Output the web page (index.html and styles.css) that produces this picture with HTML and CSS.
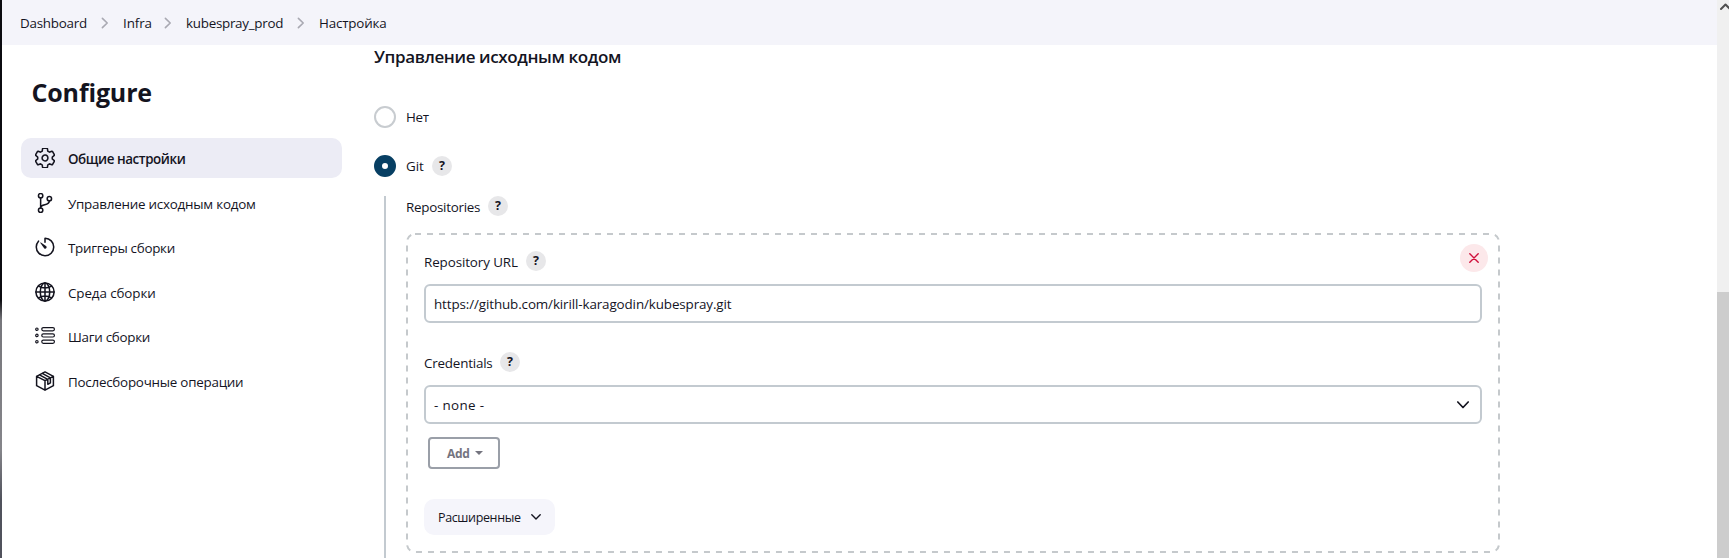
FILE: index.html
```html
<!DOCTYPE html>
<html lang="ru">
<head>
<meta charset="utf-8">
<title>Настройка</title>
<link rel="stylesheet" href="styles.css">
</head>
<body>
<div class="edge"></div>
<div class="page">
  <nav class="crumbs">
    <span class="crumb c-dash">Dashboard</span>
    <svg class="sep" viewBox="0 0 8 12"><path d="M1.4 1.400l4.800 4.600-4.800 4.600"/></svg>
    <span class="crumb c-infra">Infra</span>
    <svg class="sep" viewBox="0 0 8 12"><path d="M1.4 1.400l4.800 4.600-4.800 4.600"/></svg>
    <span class="crumb c-kube">kubespray_prod</span>
    <svg class="sep" viewBox="0 0 8 12"><path d="M1.4 1.400l4.800 4.600-4.800 4.600"/></svg>
    <span class="crumb c-conf">Настройка</span>
  </nav>
  <div class="columns">
    <aside class="side">
      <h1 class="title">Configure</h1>
      <div class="menu">
        <a class="item active"><svg class="icon" viewBox="36 36 440 440"><path stroke-width="34" d="M262.29 192.31a64 64 0 1057.4 57.4 64.13 64.13 0 00-57.4-57.4zM416.39 256a154.34 154.34 0 01-1.53 20.79l45.21 35.46a10.81 10.81 0 012.45 13.75l-42.77 74a10.81 10.81 0 01-13.14 4.59l-44.9-18.08a16.11 16.11 0 00-15.17 1.75A164.48 164.48 0 01325 400.8a15.94 15.94 0 00-8.82 12.14l-6.73 47.89a11.08 11.08 0 01-10.68 9.17h-85.54a11.11 11.11 0 01-10.69-8.87l-6.72-47.82a16.07 16.07 0 00-9-12.22 155.3 155.3 0 01-21.46-12.57 16 16 0 00-15.11-1.71l-44.89 18.07a10.81 10.81 0 01-13.14-4.58l-42.77-74a10.8 10.8 0 012.45-13.75l38.21-30a16.05 16.05 0 006-14.08c-.36-4.17-.58-8.33-.58-12.5s.21-8.27.58-12.35a16 16 0 00-6.07-13.94l-38.19-30A10.81 10.81 0 0149.48 186l42.77-74a10.81 10.81 0 0113.14-4.59l44.9 18.08a16.11 16.11 0 0015.17-1.75A164.48 164.48 0 01187 111.2a15.94 15.94 0 008.82-12.14l6.73-47.89A11.08 11.08 0 01213.23 42h85.54a11.11 11.11 0 0110.69 8.87l6.72 47.82a16.07 16.07 0 009 12.22 155.3 155.3 0 0121.46 12.57 16 16 0 0015.11 1.71l44.89-18.07a10.81 10.81 0 0113.14 4.58l42.77 74a10.8 10.8 0 01-2.45 13.75l-38.21 30a16.05 16.05 0 00-6.05 14.08c.33 4.14.55 8.3.55 12.47z"/></svg><span class="t1">Общие настройки</span></a>
        <a class="item"><svg class="icon" viewBox="36 36 440 440"><g stroke-width="34"><circle cx="160" cy="96" r="48"/><circle cx="160" cy="416" r="48"/><circle cx="352" cy="160" r="48"/><path d="M160 368V144M352 208c0 128-192 48-192 160"/></g></svg><span class="t2">Управление исходным кодом</span></a>
        <a class="item"><svg class="icon" viewBox="36 36 440 440"><path stroke-width="34" d="M112.91 128A191.85 191.85 0 0064 254c-1.18 106.35 85.65 193.8 192 194 106.2.2 192-85.83 192-192 0-104.54-83.55-189.61-187.5-192a4.36 4.36 0 00-4.5 4.37V152"/><path class="solid" d="M233.38 278.63l-79-113a8.13 8.13 0 0111.32-11.32l113 79a32.5 32.5 0 01-37.25 53.26 33.21 33.21 0 01-8.07-7.94z"/></svg><span class="t3">Триггеры сборки</span></a>
        <a class="item"><svg class="icon" viewBox="36 36 440 440"><g stroke-width="34"><circle cx="256" cy="256" r="200"/><ellipse cx="256" cy="256" rx="104" ry="200"/><path d="M256 56v400M56 256h400M113 127c88 52 198 52 286 0M113 385c88-52 198-52 286 0"/></g></svg><span class="t4">Среда сборки</span></a>
        <a class="item"><svg class="icon" viewBox="0 0 20 20"><g stroke-width="1.2"><rect x="6.8" y="1.6" width="12.6" height="3.2" rx="1.5"/><rect x="6.8" y="7.8" width="12.6" height="3.2" rx="1.5"/><rect x="6.8" y="14.1" width="12.6" height="3.2" rx="1.5"/><circle cx="1.9" cy="3.2" r="1.2"/><circle cx="1.9" cy="9.4" r="1.2"/><circle cx="1.9" cy="15.700" r="1.2"/></g></svg><span class="t5">Шаги сборки</span></a>
        <a class="item"><svg class="icon" viewBox="0 0 20 20"><path stroke-width="1.5" d="M10 .9l8.4 4.4v9.4L10 19.200 1.600 14.700V5.300zM1.600 5.300L10 9.700l8.400-4.400M10 9.700v9.500M4.500 3.800l8.300 4.500v5l2.600-1.500V6.900L7.300 2.400"/></svg><span class="t6">Послесборочные операции</span></a>
      </div>
    </aside>
    <main class="main">
      <h2 class="heading">Управление исходным кодом</h2>
      <div class="radio-row"><span class="radio"></span><span class="lbl l-no">Нет</span></div>
      <div class="radio-row"><span class="radio on"></span><span class="lbl l-git">Git</span><span class="help">?</span></div>
      <div class="nested">
        <div class="field-label"><span class="lbl l-repos">Repositories</span><span class="help">?</span></div>
        <div class="repo">
          <svg class="dashes" viewBox="0 0 1094 320"><rect x="1" y="1" width="1092" height="318" rx="8"/></svg>
          <button class="close"><svg viewBox="0 0 10 10"><path d="M.8.800l8.400 8.400M9.200.800L.8 9.200"/></svg></button>
          <div class="field-label"><span class="lbl l-url">Repository URL</span><span class="help">?</span></div>
          <div class="box"><span class="v-url">https://github.com/kirill-karagodin/kubespray.git</span></div>
          <div class="field-label cred"><span class="lbl l-cred">Credentials</span><span class="help">?</span></div>
          <div class="box"><span class="v-none">- none -</span><svg class="chev" viewBox="0 0 12 8"><path d="M.8 1L6 6.500 11.200 1"/></svg></div>
          <button class="add"><span class="l-add">Add</span><i class="caret"></i></button>
          <button class="adv"><span class="l-adv">Расширенные</span><svg viewBox="0 0 10 6"><path d="M.8.800L5 4.900 9.200.800"/></svg></button>
        </div>
      </div>
    </main>
  </div>
</div>
<div class="scroll"><svg viewBox="0 0 12 12"><path d="M4 9l4.500-4.500L13 9"/></svg><div class="thumb"></div></div>
</body>
</html>
```
FILE: styles.css
```css
* { box-sizing: border-box; }
body {
  margin: 0;
  display: flex;
  height: 558px;
  overflow: hidden;
  background: #fff;
  color: #14141f;
  font: 13.4px/20px "Open Sans", "Noto Sans", sans-serif;
}
svg { display: block; flex: none; fill: none; stroke: currentColor; stroke-linecap: round; stroke-linejoin: round; }
button { font: inherit; color: inherit; margin: 0; padding: 0; border: 0; }
span { white-space: nowrap; }
.edge { width: 2px; flex: none; background: linear-gradient(#0b0b10 0 300px, #77777c 320px, #85858a 450px, #50525c 500px, #50525c); }
.page { width: 1715px; flex: none; }
.crumbs { height: 45px; background: #f4f4fa; display: flex; align-items: center; padding-left: 18px; }
.crumb { flex: none; }
.c-dash { width: 67px; letter-spacing: -.25px; }
.c-infra { width: 27px; letter-spacing: -.1px; }
.c-kube { width: 97px; letter-spacing: -.27px; }
.c-conf { letter-spacing: -.17px; }
.sep { width: 8px; height: 12px; margin: 0 14px; stroke: #a9a9b2; stroke-width: 1.6; }
.columns { display: flex; height: 513px; }
.side { width: 340px; padding: 29px 0 0 19px; }
.title { margin: 0 0 28px 10.5px; font-size: 25px; line-height: 36px; font-weight: 700; letter-spacing: -.15px; }
.menu { display: flex; flex-direction: column; gap: 4.6px; }
.item { height: 40px; border-radius: 10px; display: flex; align-items: center; gap: 13px; padding-left: 14px; }
.item span { position: relative; top: 1px; }
.active { background: #ececf5; font-weight: 600; }
.t1 { letter-spacing: -.43px; }
.t2 { letter-spacing: -.23px; }
.t3 { letter-spacing: -.28px; }
.t4 { letter-spacing: -.1px; }
.t5 { letter-spacing: -.27px; }
.t6 { letter-spacing: -.24px; }
.icon { width: 20px; height: 20px; }
.solid { fill: currentColor; stroke: none; }
.main { flex: 1; padding-left: 32px; }
.heading { margin: 0; height: 61px; font-size: 17px; line-height: 24px; font-weight: 600; letter-spacing: -.38px; }
.radio-row { display: flex; align-items: center; height: 22px; margin-bottom: 27px; }
.radio { width: 22px; height: 22px; border-radius: 50%; border: 2px solid #c8ccd0; margin-right: 10px; }
.on { border: 8px solid #073f63; }
.help { width: 20px; height: 20px; border-radius: 50%; background: #e7e7e9; font-weight: 700; font-size: 12.5px; line-height: 20px; text-align: center; }
.nested { margin: -8px 0 0 10px; height: 362px; border-left: 2px solid #c3cad0; padding-left: 20px; }
.field-label { display: flex; align-items: center; height: 20px; }
.field-label .lbl { padding-top: 2px; }
.l-no { letter-spacing: -.3px; }
.l-git { width: 26px; }
.l-repos { width: 82px; letter-spacing: -.27px; }
.l-url { width: 102px; letter-spacing: -.1px; }
.l-cred { width: 76px; letter-spacing: -.2px; }
.v-url { letter-spacing: -.11px; }
.v-none { letter-spacing: .35px; }
.repo { position: relative; width: 1094px; height: 320px; margin-top: 17px; padding: 18px; }
.dashes { position: absolute; left: 0; top: 0; width: 1094px; height: 320px; stroke: #c5c9cc; stroke-width: 2; stroke-linecap: butt; stroke-dasharray: 6 6; }
.close { position: absolute; right: 12px; top: 11px; width: 28px; height: 28px; border-radius: 50%; background: #fce8ea; color: #d0103c; display: grid; place-items: center; }
.close svg { width: 10px; height: 10px; stroke-width: 1.4; }
.box { height: 39px; margin-top: 13px; border: 2px solid #c3cad0; border-radius: 6px; display: flex; align-items: center; justify-content: space-between; padding: 0 11px 0 8px; }
.chev { width: 12px; height: 8px; stroke-width: 1.7; }
.cred { margin-top: 29px; }
.add { display: flex; align-items: center; width: 72px; height: 32px; margin: 13px 0 0 4px; border: 2px solid #9a9fa8; border-radius: 4px; background: #fff; padding-left: 17px; font-weight: 700; font-size: 12px; color: #74747f; }
.l-add { padding-top: 2px; letter-spacing: -.3px; }
.caret { margin-left: 5px; border: 4px solid transparent; border-top-color: #74747f; border-bottom: 0; }
.adv { display: flex; align-items: center; gap: 10px; width: 131px; height: 36px; margin-top: 30px; padding-left: 14px; border-radius: 10px; background: #f5f5fb; font-size: 12.5px; }
.l-adv { padding-top: 2px; letter-spacing: -.37px; }
.adv svg { width: 10px; height: 6px; stroke-width: 1.4; }
.scroll { width: 12px; height: 558px; flex: none; background: #f0f0f0; }
.scroll svg { width: 12px; height: 12px; stroke: #505050; stroke-width: 2; }
.thumb { margin-top: 280px; height: 266px; background: #cdcdcd; }
```
